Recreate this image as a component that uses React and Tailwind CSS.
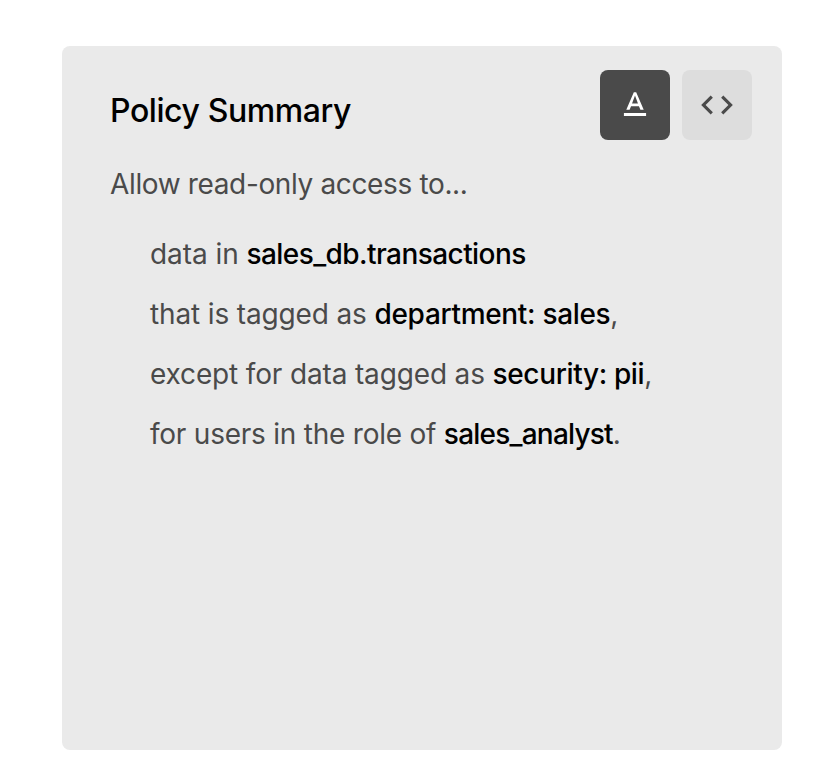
const rows = [
  { before: 'data in', strong: 'sales_db.transactions', after: '', plain: 'tracking-[-0.06px]', bold: 'tracking-[-0.57px]' },
  { before: 'that is tagged as', strong: 'department: sales', after: ',', plain: 'tracking-[-0.14px]', bold: 'tracking-[-0.32px]' },
  { before: 'except for data tagged as', strong: 'security: pii', after: ',', plain: 'tracking-[-0.15px]', bold: 'tracking-[-0.36px]' },
  { before: 'for users in the role of', strong: 'sales_analyst', after: '.', plain: 'tracking-[-0.23px]', bold: 'tracking-[-0.78px]' },
];

export default function App() {
  return (
    <div className="min-h-screen bg-white pt-[46px] pl-[62px] font-['Inter',sans-serif]">
      <main className="h-[704px] w-[720px] rounded-lg bg-[#eaeaea] pt-6 pr-[30px] pl-12">
        <header className="flex h-[70px] items-start justify-between">
          <h1 className="pt-px text-[32px] leading-[80px] font-medium tracking-[-0.42px] text-black">Policy Summary</h1>
          <div className="flex gap-3">
            <button className="flex size-[70px] items-center justify-center rounded-lg bg-[#4a4a4a] text-white" aria-label="Text">
              <svg width="38" height="38" viewBox="0 0 24 24" fill="currentColor">
                <path d="M5 17v2h14v-2H5zm4.500-4.200h5l.9 2.200h2.100L12.750 4h-1.500L6.500 15h2.100l.9-2.200zM12 5.980L13.870 11h-3.740L12 5.980z" />
              </svg>
            </button>
            <button className="flex size-[70px] items-center justify-center rounded-lg bg-[#dddddd] text-[#4a4a4a]" aria-label="Code">
              <svg width="38" height="38" viewBox="0 0 24 24" fill="currentColor">
                <path d="M9.400 16.600L4.800 12l4.600-4.600L8 6l-6 6 6 6 1.400-1.400zm5.200 0l4.600-4.600-4.600-4.600L16 6l6 6-6 6-1.400-1.400z" />
              </svg>
            </button>
          </div>
        </header>
        <p className="mt-[22px] text-[28px] leading-[44px] tracking-[-0.36px] text-[#4a4a4a]">Allow read-only access to...</p>
        <ul className="mt-[18px] pl-10 text-[28px] leading-[60px] whitespace-nowrap text-[#4a4a4a]">
          {rows.map((r) => (
            <li key={r.strong}>
              <span className={r.plain}>{r.before} </span>
              <span className={`font-medium text-black ${r.bold}`}>{r.strong}</span>
              {r.after}
            </li>
          ))}
        </ul>
      </main>
    </div>
  );
}
